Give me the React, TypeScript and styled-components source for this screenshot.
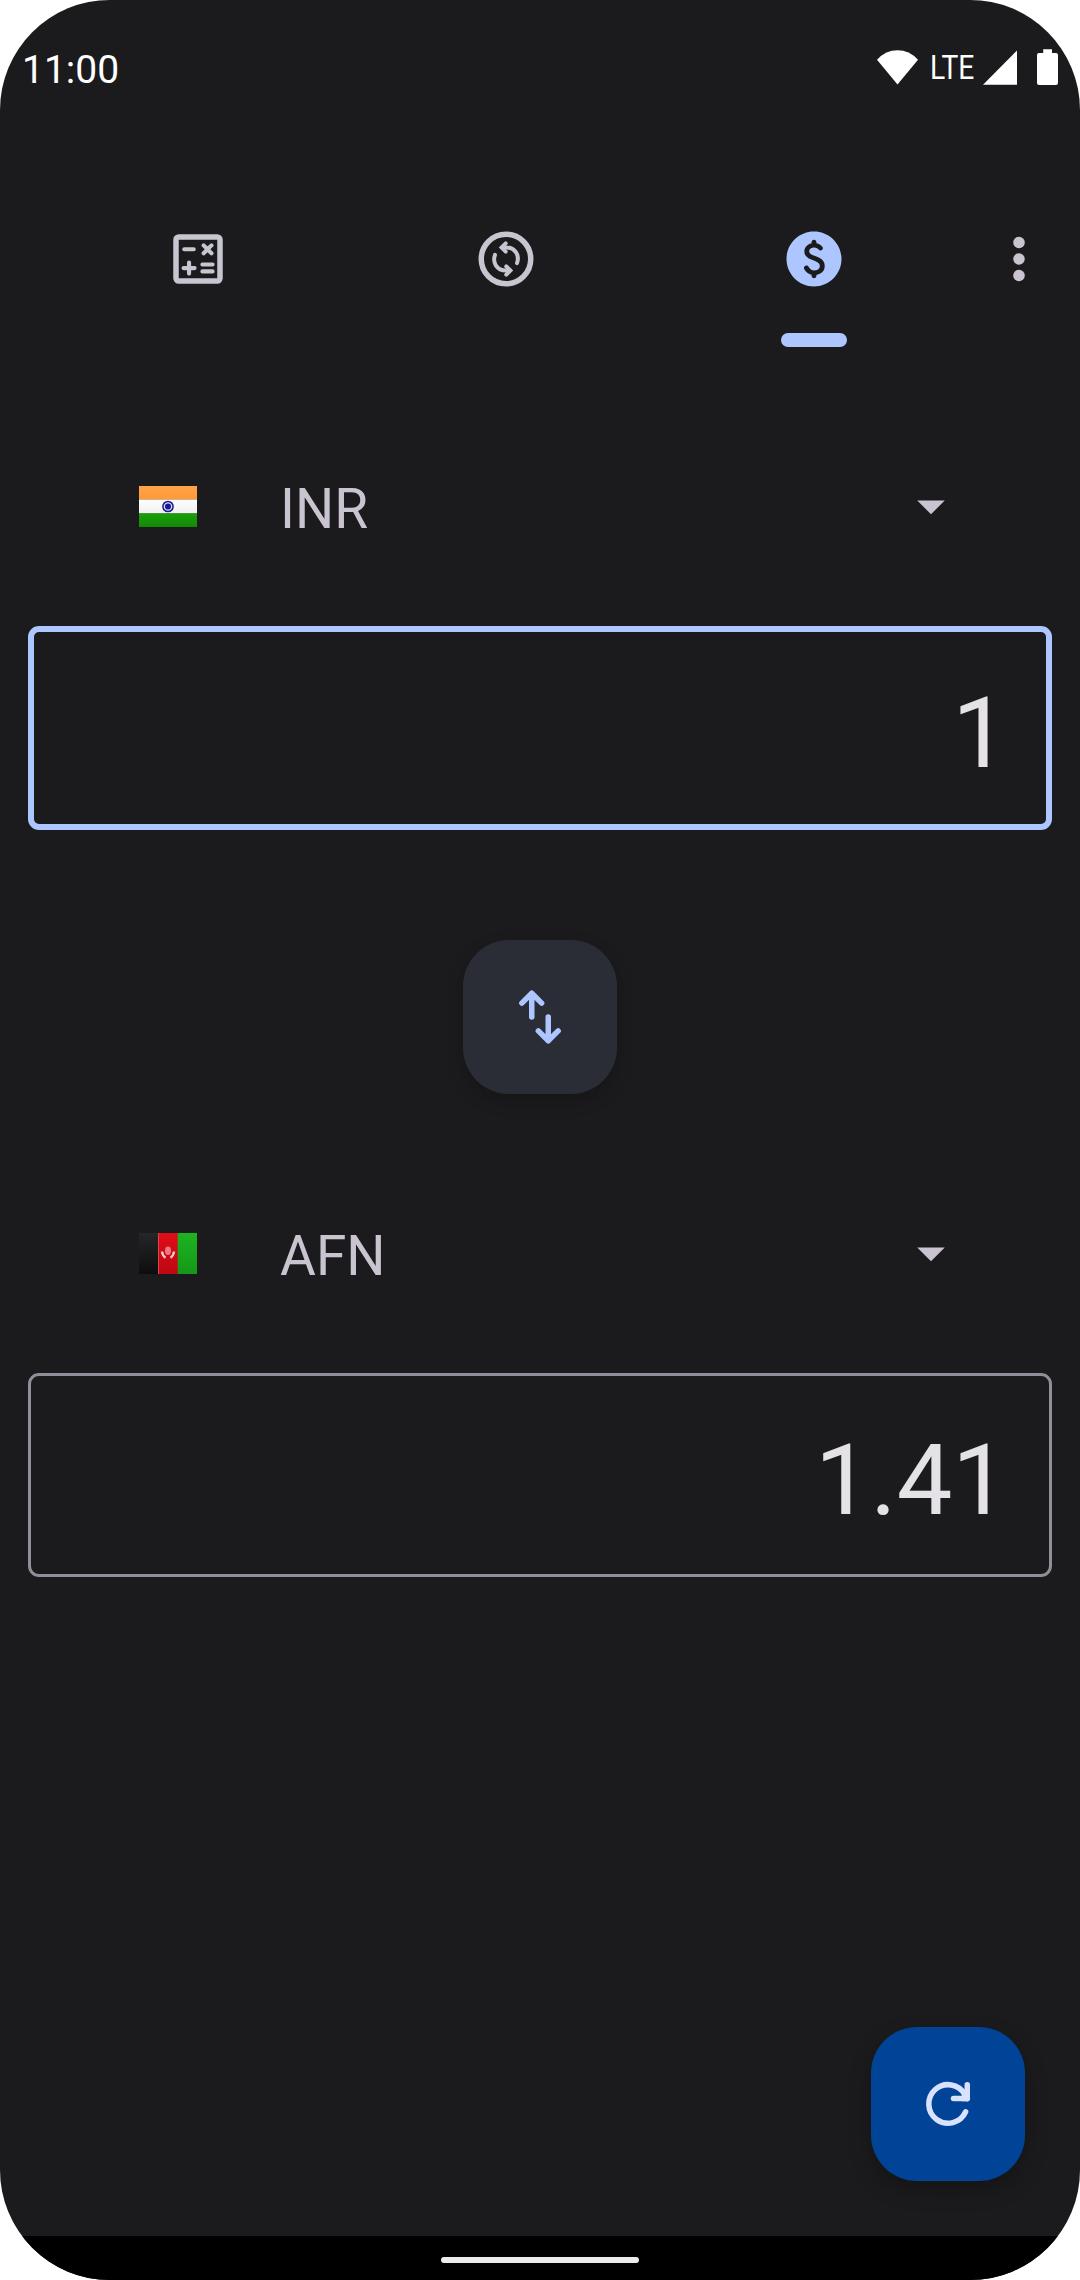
import React from "react";
import styled, { createGlobalStyle } from "styled-components";

const color = {
  surface: "#1b1b1d",
  accent: "#adc6ff",
  muted: "#c5c6d0",
  label: "#cac4d0",
  text: "#e4e2e6",
  outline: "#8e9099",
};

const GlobalStyle = createGlobalStyle`
  *, *::before, *::after { box-sizing: border-box; }
  body { margin: 0; background: #fff; font-family: Roboto, "Liberation Sans", sans-serif; }
  svg { display: block; flex: none; }
  button { border: 0; padding: 0; background: none; font: inherit; color: inherit; }
`;

const Screen = styled.div`
  width: 1080px;
  height: 2280px;
  display: flex;
  flex-direction: column;
  overflow: hidden;
  border-radius: 110px;
  background: ${color.surface};
`;

const StatusBar = styled.header`
  height: 171px;
  padding: 49px 22px 0 22px;
  display: flex;
  align-items: flex-start;
  justify-content: space-between;
  color: #fff;
`;

const Clock = styled.time`
  font-size: 39px;
  line-height: 42px;
`;

const StatusIcons = styled.div`
  display: flex;
  align-items: flex-start;
`;

const NetworkType = styled.span`
  width: 46px;
  margin: 0 7px 0 12px;
  font-size: 34px;
  line-height: 37px;
  font-weight: 400;
  white-space: nowrap;
  transform: scaleX(0.83);
  transform-origin: left center;
`;

const SignalIcon = styled.svg`
  margin-right: 20px;
`;

const TabBar = styled.nav`
  height: 176px;
  padding: 55px 10px 0 44px;
  display: flex;
  align-items: flex-start;
`;

const Tab = styled.button<{ $active?: boolean }>`
  width: 308px;
  display: flex;
  flex-direction: column;
  align-items: center;
  gap: 41px;
  color: ${(p) => (p.$active ? color.accent : color.muted)};
`;

const TabIndicator = styled.span`
  width: 66px;
  height: 14px;
  border-radius: 7px;
  background: ${color.accent};
`;

const MenuButton = styled.button`
  flex: 1;
  display: flex;
  justify-content: center;
  color: ${color.label};
`;

const Content = styled.main`
  flex: 1;
  padding-top: 96px;
  display: flex;
  flex-direction: column;
`;

const CurrencyRow = styled.div`
  height: 126px;
  padding: 0 116px 0 139px;
  display: flex;
  align-items: center;
  color: ${color.label};
`;

const CurrencyCode = styled.span`
  flex: 1;
  margin-left: 83px;
  padding-top: 6px;
  font-size: 55px;
  line-height: 66px;
`;

const AmountField = styled.div<{ $focused?: boolean }>`
  height: 204px;
  margin: 57px 28px 0;
  padding-top: 10px;
  display: flex;
  align-items: center;
  justify-content: flex-end;
  padding-right: ${(p) => (p.$focused ? 38 : 41)}px;
  border: ${(p) => (p.$focused ? `6px solid ${color.accent}` : `3px solid ${color.outline}`)};
  border-radius: 11px;
  color: ${color.text};
  font-size: 99px;
  line-height: 116px;
`;

const SquareButton = styled.button`
  width: 154px;
  height: 154px;
  flex: none;
  display: flex;
  align-items: center;
  justify-content: center;
  border-radius: 46px;
`;

const SwapButton = styled(SquareButton)`
  align-self: center;
  margin: 110px 0 96px;
  background: #2b2d36;
  color: ${color.accent};
  box-shadow: 0 7px 18px rgba(0, 0, 0, 0.2);
`;

const RefreshButton = styled(SquareButton)`
  align-self: flex-end;
  margin: auto 55px 55px 0;
  background: #004397;
  color: #d8e2ff;
  box-shadow: 0 9px 22px rgba(0, 0, 0, 0.24);
`;

const NavigationBar = styled.footer`
  height: 44px;
  padding-top: 4px;
  display: flex;
  align-items: center;
  justify-content: center;
  background: #000;
`;

const HomeHandle = styled.span`
  width: 198px;
  height: 6px;
  border-radius: 3px;
  background: #ececec;
`;

const Icon = ({ children }: { children: React.ReactNode }) => (
  <svg width="66" height="66" viewBox="0 0 24 24" fill="none" stroke="currentColor" strokeLinecap="round" strokeLinejoin="round">
    {children}
  </svg>
);

const CalculatorIcon = () => (
  <Icon>
    <rect x="4" y="4" width="16" height="16" rx="1" strokeWidth="2" />
    <path
      strokeWidth="1.5"
      d="M7 8.45h3.45M14.05 7.05l2.85 2.85M16.9 7.05l-2.85 2.85M8.75 13.3v4M6.75 15.3h4M13.6 14h3.7M13.6 16.5h3.7"
    />
  </Icon>
);

const ConvertIcon = () => (
  <Icon>
    <circle cx="12" cy="12" r="9" strokeWidth="2" />
    <g strokeWidth="1.45">
      <path d="M8 10.5C7 13.3 8.6 16.2 12 16.2H13.4" />
      <path d="M16 13.5C17 10.7 15.4 7.8 12 7.8H10.6" />
      <path strokeLinejoin="miter" d="M12.1 14.7L13.6 16.2L12.1 17.7" />
      <path strokeLinejoin="miter" d="M11.9 6.3L10.4 7.8L11.9 9.3" />
    </g>
  </Icon>
);

const DollarIcon = () => (
  <Icon>
    <path
      fill="currentColor"
      stroke="none"
      d="M12 2C6.48 2 2 6.48 2 12s4.48 10 10 10 10-4.48 10-10S17.52 2 12 2zm.88 15.76v.36c0 .48-.39.88-.88.88s-.88-.39-.88-.88v-.42c-.63-.15-1.93-.61-2.69-2.1-.23-.44-.01-.99.45-1.18l.07-.03c.41-.17.87 0 1.08.39.32.61.95 1.37 2.12 1.37.93 0 1.98-.48 1.98-1.61 0-.96-.7-1.46-2.28-2.03-1.1-.39-3.35-1.03-3.35-3.31 0-.1.01-2.4 2.62-2.96v-.36c0-.49.39-.88.88-.88s.88.39.88.88v.37c1.07.19 1.75.76 2.16 1.3.34.44.16 1.08-.36 1.3-.36.15-.78.02-1.02-.29-.28-.38-.78-.77-1.6-.77-.7 0-1.81.37-1.81 1.39 0 .95.86 1.31 2.64 1.9 2.4.83 3.01 2.05 3.01 3.45 0 2.62-2.5 3.13-2.9 3.19z"
    />
  </Icon>
);

const MoreIcon = () => (
  <Icon>
    <g fill="currentColor" stroke="none">
      <circle cx="12" cy="6" r="2.1" />
      <circle cx="12" cy="12" r="2.1" />
      <circle cx="12" cy="18" r="2.1" />
    </g>
  </Icon>
);

const DropdownIcon = () => (
  <Icon>
    <path fill="currentColor" stroke="none" d="M7 10l5 5 5-5z" />
  </Icon>
);

const SwapIcon = () => (
  <Icon>
    <path strokeWidth="2" d="M9 12V3.4M5.4 6.95L9 3.35l3.6 3.6M15 12v8.6M11.4 17.05l3.6 3.6 3.6-3.6" />
  </Icon>
);

const RefreshIcon = () => (
  <Icon>
    <path strokeWidth="2" d="M18.4 14.85A7 7 0 1 1 18.1 8.5L19 10" />
    <path strokeWidth="2" d="M19 5v5h-5" />
    <path fill="currentColor" stroke="none" d="M17 7.5L20 7.5V10.4L19.5 11H17z" />
  </Icon>
);

const IndiaFlag = () => (
  <svg width="58" height="41" viewBox="0 0 58 41">
    <defs>
      <linearGradient id="saffron" x2="0" y2="1">
        <stop stopColor="#ffa44a" />
        <stop offset="1" stopColor="#ff9934" />
      </linearGradient>
      <linearGradient id="white" x2="0" y2="1">
        <stop stopColor="#ffffff" />
        <stop offset="1" stopColor="#f0f0f0" />
      </linearGradient>
      <linearGradient id="leaf" x2="0" y2="1">
        <stop stopColor="#1a9f0b" />
        <stop offset="1" stopColor="#138806" />
      </linearGradient>
    </defs>
    <rect width="58" height="13.6" fill="url(#saffron)" />
    <rect y="13.5" width="58" height="14" fill="url(#white)" />
    <rect y="27.4" width="58" height="13.6" fill="url(#leaf)" />
    <circle cx="29" cy="20.5" r="5.1" fill="#d9d9ef" stroke="#181a94" strokeWidth="1.5" />
    <circle cx="29" cy="20.5" r="3" fill="#181a94" />
  </svg>
);

const AfghanistanFlag = () => (
  <svg width="58" height="41" viewBox="0 0 58 41">
    <defs>
      <linearGradient id="black" x2="0" y2="1">
        <stop stopColor="#262626" />
        <stop offset="1" stopColor="#0d0d0d" />
      </linearGradient>
      <linearGradient id="red" x2="0" y2="1">
        <stop stopColor="#e00d19" />
        <stop offset="1" stopColor="#bd0811" />
      </linearGradient>
      <linearGradient id="green" x2="0" y2="1">
        <stop stopColor="#1db321" />
        <stop offset="1" stopColor="#159818" />
      </linearGradient>
    </defs>
    <rect width="19.5" height="41" fill="url(#black)" />
    <rect x="19" width="20" height="41" fill="url(#red)" />
    <rect x="19" width="1" height="41" fill="#d84850" />
    <rect x="38.7" width="19.3" height="41" fill="url(#green)" />
    <ellipse cx="29" cy="17.8" rx="3" ry="4.2" fill="#e97b80" />
    <path d="M23 18.5Q23.4 23 26.6 24.6M35 18.5Q34.6 23 31.4 24.6" fill="none" stroke="#f5c4c6" strokeWidth="2.4" />
  </svg>
);

export default function App() {
  return (
    <>
      <GlobalStyle />
      <Screen>
        <StatusBar>
          <Clock>11:00</Clock>
          <StatusIcons>
            <svg width="41" height="36" viewBox="0 0 41 36" fill="currentColor">
              <path d="M0 10.7Q8.8 1.3 20.5 1.3T41 10.7L20.5 35.5z" />
            </svg>
            <NetworkType>LTE</NetworkType>
            <SignalIcon width="34" height="36" viewBox="0 0 34 36" fill="currentColor">
              <path d="M0 35.7L34 1.5v34.2z" />
            </SignalIcon>
            <svg width="21" height="36" viewBox="0 0 21 36" fill="currentColor">
              <path d="M6.2 0.3h8.8V4h4a2 2 0 0 1 2 2v28a2 2 0 0 1-2 2H2a2 2 0 0 1-2-2V6a2 2 0 0 1 2-2h4.2z" />
            </svg>
          </StatusIcons>
        </StatusBar>
        <TabBar>
          <Tab aria-label="Calculator">
            <CalculatorIcon />
          </Tab>
          <Tab aria-label="Unit converter">
            <ConvertIcon />
          </Tab>
          <Tab aria-label="Currency" $active>
            <DollarIcon />
            <TabIndicator />
          </Tab>
          <MenuButton aria-label="More options">
            <MoreIcon />
          </MenuButton>
        </TabBar>
        <Content>
          <CurrencyRow>
            <IndiaFlag />
            <CurrencyCode>INR</CurrencyCode>
            <DropdownIcon />
          </CurrencyRow>
          <AmountField $focused>1</AmountField>
          <SwapButton aria-label="Swap currencies">
            <SwapIcon />
          </SwapButton>
          <CurrencyRow>
            <AfghanistanFlag />
            <CurrencyCode>AFN</CurrencyCode>
            <DropdownIcon />
          </CurrencyRow>
          <AmountField>1.41</AmountField>
          <RefreshButton aria-label="Refresh rates">
            <RefreshIcon />
          </RefreshButton>
        </Content>
        <NavigationBar>
          <HomeHandle />
        </NavigationBar>
      </Screen>
    </>
  );
}
